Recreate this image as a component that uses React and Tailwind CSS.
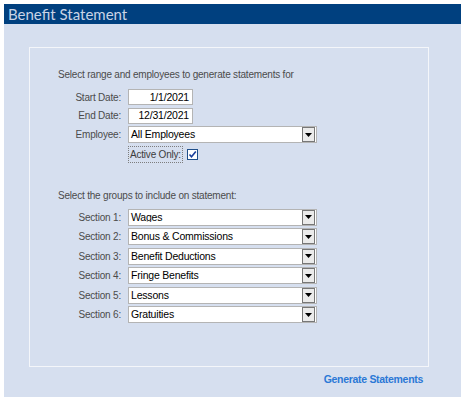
const SECTIONS = [
  "Wages",
  "Bonus & Commissions",
  "Benefit Deductions",
  "Fringe Benefits",
  "Lessons",
  "Gratuities",
];

function ComboBox({ value, width }) {
  return (
    <div
      className={`flex h-[17px] items-center border border-[#b4b4b4] bg-white ${width}`}
    >
      <span className="flex-1 truncate pl-[2px] text-[10.5px] leading-none tracking-[-0.2px] text-black">
        {value}
      </span>
      <span className="mr-px flex h-[15px] w-[13px] items-center justify-center border border-[#777] bg-[#ebebeb]">
        <svg width="7" height="4" viewBox="0 0 7 4">
          <path d="M0 0h7L3.5 4z" fill="#000" />
        </svg>
      </span>
    </div>
  );
}

function DateBox({ value }) {
  return (
    <div className="flex h-[16px] w-[65px] items-center justify-end border border-[#b4b4b4] bg-white pr-[3px] text-[10.5px] leading-none tracking-[-0.2px] text-black">
      {value}
    </div>
  );
}

export default function App() {
  return (
    <div className="h-[401px] w-[471px] bg-white pl-[4px] pt-[4px] font-['Liberation_Sans',Arial,sans-serif]">
      <div className="flex h-[393px] w-[457px] flex-col bg-[#d6dfef]">
        <div className="flex h-[20px] items-center bg-[#00407f] pl-[4px]">
          <span className="font-['Lato',sans-serif] text-[15px] leading-none text-[#c9d4e6]">
            Benefit Statement
          </span>
        </div>

        <div className="ml-[25px] mt-[23px] h-[320px] w-[400px] border border-[#f4f6fa] pl-[28px] pt-[20px] text-[10px] tracking-[-0.2px] text-[#4b4b4b]">
          <p className="leading-[13px]">
            Select range and employees to generate statements for
          </p>

          <div className="mt-[8px] grid grid-cols-[63px_auto] items-center gap-x-[7px] gap-y-[2.5px]">
            <span className="text-right">Start Date:</span>
            <DateBox value="1/1/2021" />
            <span className="text-right">End Date:</span>
            <DateBox value="12/31/2021" />
            <span className="text-right">Employee:</span>
            <ComboBox value="All Employees" width="w-[189px]" />
            <span />
            <div className="flex items-center gap-[4px]">
              <span className="flex h-[17px] items-center border border-dotted border-[#7d7d7d] px-[1px] text-[#3c3c3c]">
                Active Only:
              </span>
              <span className="flex h-[11px] w-[11px] items-center justify-center border border-[#1f4f8a] bg-white">
                <svg width="9" height="9" viewBox="0 0 9 9">
                  <path
                    d="M1.5 4.5l2 2.2L7.8 1.5"
                    fill="none"
                    stroke="#1a3f9c"
                    strokeWidth="1.6"
                  />
                </svg>
              </span>
            </div>
          </div>

          <p className="mt-[26px] leading-[13px]">
            Select the groups to include on statement:
          </p>

          <div className="mt-[7px] grid grid-cols-[63px_auto] items-center gap-x-[7px] gap-y-[2.5px]">
            {SECTIONS.map((name, index) => (
              <div key={name} className="contents">
                <span className="text-right">Section {index + 1}:</span>
                <ComboBox value={name} width="w-[189px]" />
              </div>
            ))}
          </div>
        </div>

        <div className="mt-[5px] flex w-[419px] justify-end">
          <span className="text-[10.5px] font-bold tracking-[-0.3px] text-[#2b78d6]">
            Generate Statements
          </span>
        </div>
      </div>
    </div>
  );
}
